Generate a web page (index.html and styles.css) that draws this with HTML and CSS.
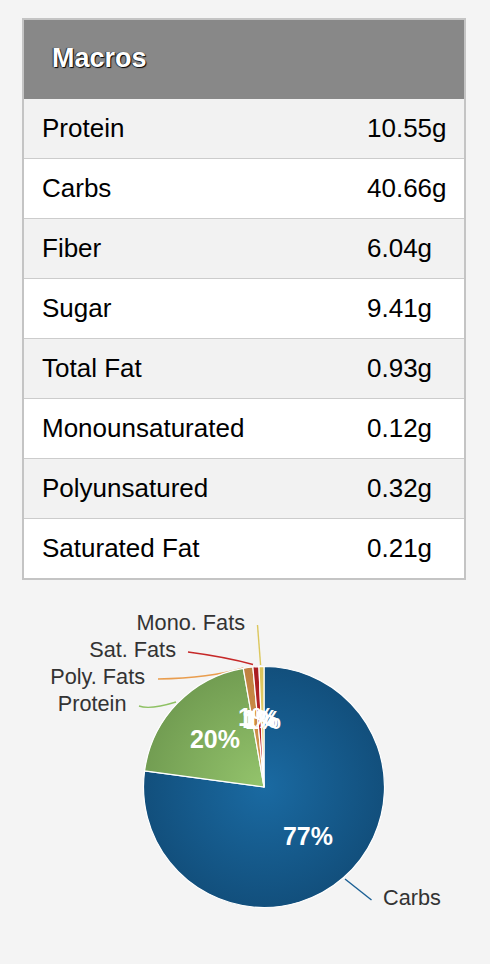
FILE: index.html
```html
<!DOCTYPE html>
<html lang="en">
<head>
<meta charset="utf-8">
<title>Macros</title>
<link rel="stylesheet" href="styles.css">
</head>
<body>
<div class="macros">
  <div class="macros-head">Macros</div>
  <div class="macro-row"><span class="macro-name">Protein</span><span class="macro-val">10.55g</span></div>
  <div class="macro-row"><span class="macro-name">Carbs</span><span class="macro-val">40.66g</span></div>
  <div class="macro-row"><span class="macro-name">Fiber</span><span class="macro-val">6.04g</span></div>
  <div class="macro-row"><span class="macro-name">Sugar</span><span class="macro-val">9.41g</span></div>
  <div class="macro-row"><span class="macro-name">Total Fat</span><span class="macro-val">0.93g</span></div>
  <div class="macro-row"><span class="macro-name">Monounsaturated</span><span class="macro-val">0.12g</span></div>
  <div class="macro-row"><span class="macro-name">Polyunsatured</span><span class="macro-val">0.32g</span></div>
  <div class="macro-row"><span class="macro-name">Saturated Fat</span><span class="macro-val">0.21g</span></div>
</div>
<svg class="pie" width="490" height="384" viewBox="0 580 490 384" xmlns="http://www.w3.org/2000/svg">
  <defs>
    <radialGradient id="gCarbs" gradientUnits="userSpaceOnUse" cx="264" cy="787" r="121">
      <stop offset="0" stop-color="#1a6aa2"/>
      <stop offset="1" stop-color="#124f7c"/>
    </radialGradient>
    <radialGradient id="gProt" gradientUnits="userSpaceOnUse" cx="264" cy="787" r="121">
      <stop offset="0" stop-color="#94c46c"/>
      <stop offset="1" stop-color="#729d52"/>
    </radialGradient>
    <radialGradient id="gPoly" gradientUnits="userSpaceOnUse" cx="264" cy="787" r="121">
      <stop offset="0" stop-color="#d89a50"/>
      <stop offset="1" stop-color="#bf8040"/>
    </radialGradient>
    <radialGradient id="gSat" gradientUnits="userSpaceOnUse" cx="264" cy="787" r="121">
      <stop offset="0" stop-color="#c82a2a"/>
      <stop offset="1" stop-color="#a81d22"/>
    </radialGradient>
    <radialGradient id="gMono" gradientUnits="userSpaceOnUse" cx="264" cy="787" r="121">
      <stop offset="0" stop-color="#f0dc78"/>
      <stop offset="1" stop-color="#d9c25a"/>
    </radialGradient>
  </defs>

  <g class="connectors" fill="none" stroke-width="1.4">
    <path d="M257.5 625 L260.6 665" stroke="#dcc75c"/>
    <path d="M188 652 Q226 657 253 664.5" stroke="#c62828"/>
    <path d="M158 679 Q210 678 243.5 668" stroke="#e99d4e"/>
    <path d="M139 706 Q150 710 176 702" stroke="#8ec163"/>
    <path d="M345 879 L371.5 900" stroke="#1a5f94"/>
  </g>

  <g class="slices" stroke="#ffffff" stroke-width="1.2" stroke-linejoin="round">
    <path d="M264 787 L264 666.5 A120.5 120.5 0 1 1 144.59 770.85 Z" fill="url(#gCarbs)"/>
    <path d="M264 787 L144.59 770.85 A120.5 120.5 0 0 1 243.28 668.29 Z" fill="url(#gProt)"/>
    <path d="M264 787 L243.28 668.29 A120.5 120.5 0 0 1 252.87 667.02 Z" fill="url(#gPoly)"/>
    <path d="M264 787 L252.87 667.02 A120.5 120.5 0 0 1 258.95 666.61 Z" fill="url(#gSat)"/>
    <path d="M264 787 L258.95 666.61 A120.5 120.5 0 0 1 264 666.5 Z" fill="url(#gMono)"/>
  </g>

  <g class="pie-labels">
    <text x="245" y="630" text-anchor="end">Mono. Fats</text>
    <text x="176" y="657" text-anchor="end">Sat. Fats</text>
    <text x="145" y="684" text-anchor="end">Poly. Fats</text>
    <text x="126.5" y="711" text-anchor="end">Protein</text>
    <text x="383" y="905">Carbs</text>
  </g>

  <g class="pie-pct">
    <text x="215" y="748" text-anchor="middle">20%</text>
    <text x="308" y="845" text-anchor="middle">77%</text>
    <text x="256" y="726" text-anchor="middle">1%</text>
    <text x="260" y="728" text-anchor="middle">1%</text>
    <text x="263" y="729" text-anchor="middle">1%</text>
  </g>
</svg>
</body>
</html>
```

FILE: styles.css
```css
html, body {
  margin: 0;
  padding: 0;
  background: #f4f4f4;
}

body {
  width: 490px;
  height: 964px;
  overflow: hidden;
  font-family: "Liberation Sans", Arial, Helvetica, sans-serif;
  color: #000;
}

.macros {
  width: 444px;
  box-sizing: border-box;
  margin: 18px 0 0 22px;
  border: 2px solid #c4c4c4;
  background: #fff;
}

.macros-head {
  height: 79px;
  box-sizing: border-box;
  background: #888888;
  color: #fff;
  font-weight: bold;
  font-size: 27px;
  line-height: 76px;
  padding-left: 28px;
  text-shadow: 1px 1px 1px #000, -1px 0 1px rgba(0, 0, 0, 0.7);
}

.macro-row {
  height: 59px;
  display: grid;
  grid-template-columns: 1fr 97px;
  align-items: center;
  padding-left: 18px;
  font-size: 26px;
  border-bottom: 1px solid #cccccc;
  background: #ffffff;
}

.macro-row:nth-child(even) {
  background: #f2f2f2;
}

.macro-row:last-child {
  border-bottom: none;
}

.macro-name,
.macro-val {
  white-space: nowrap;
}

.pie {
  display: block;
}

.pie-labels text {
  font-family: "Liberation Sans", Arial, Helvetica, sans-serif;
  font-size: 21.7px;
  fill: #333333;
}

.pie-pct text {
  font-family: "Liberation Sans", Arial, Helvetica, sans-serif;
  font-size: 25px;
  font-weight: bold;
  fill: #ffffff;
}
```
